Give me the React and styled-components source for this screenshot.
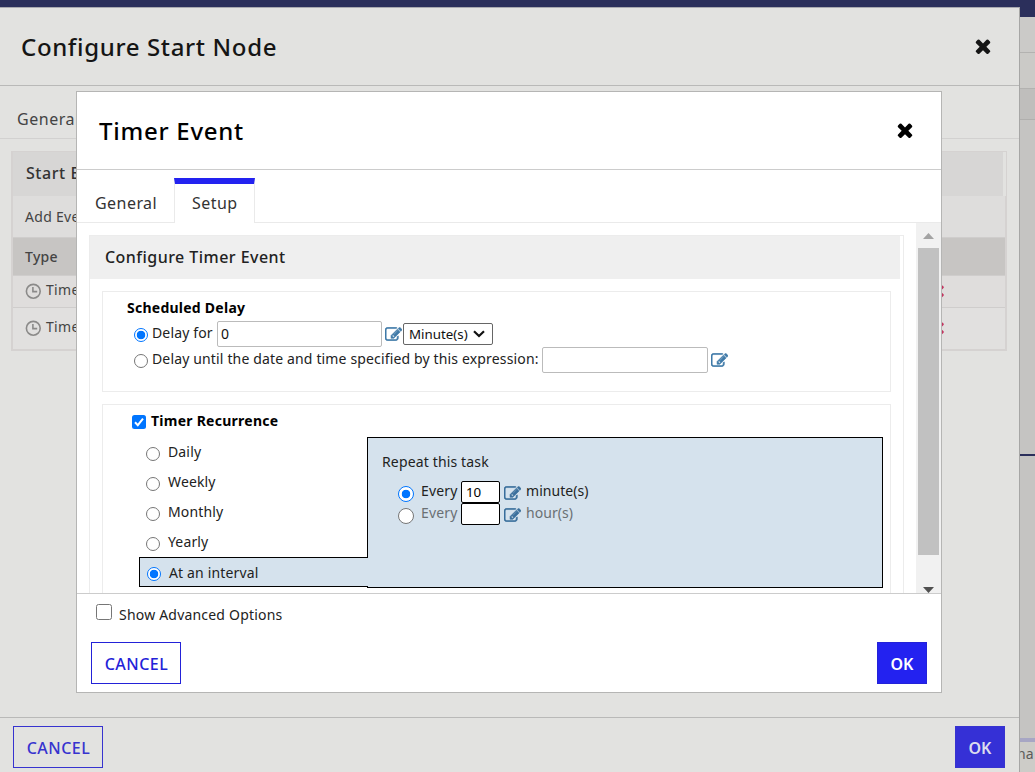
import React from 'react'
import styled, { createGlobalStyle } from 'styled-components'

const GlobalStyle = createGlobalStyle`
  * {
    box-sizing: border-box;
  }
  body {
    margin: 0;
    overflow: hidden;
    font-family: 'Noto Sans', 'Open Sans', sans-serif;
    font-size: 14px;
    letter-spacing: 0.15px;
    color: #222;
  }
  input, select, button {
    font-family: inherit;
    margin: 0;
  }
`

const recurrences = ['Daily', 'Weekly', 'Monthly', 'Yearly', 'At an interval']

const ClockIcon = () => (
  <svg width='16' height='16' viewBox='0 0 16 16' fill='none' stroke='#8b8a89' strokeWidth='1.6'>
    <circle cx='8.3' cy='8.3' r='6.9' />
    <path d='M7.9 4v4.6h4.3' />
  </svg>
)

const CloseIcon = ({ size, className }) => (
  <svg className={className} width={size} height={size} viewBox='0 0 1792 1792' fill='currentColor'>
    <path d='M1490 1322q0 40-28 68l-136 136q-28 28-68 28t-68-28l-294-294-294 294q-28 28-68 28t-68-28l-136-136q-28-28-28-68t28-68l294-294-294-294q-28-28-28-68t28-68l136-136q28-28 68-28t68 28l294 294 294-294q28-28 68-28t68 28l136 136q28 28 28 68t-28 68l-294 294 294 294q28 28 28 68z' />
  </svg>
)

const EditIcon = () => (
  <svg className='edit' viewBox='0 128 1792 1408' fill='currentColor' stroke='currentColor' strokeWidth='60'>
    <path d='M888 1184l116-116-152-152-116 116v56h96v96h56zm440-720q-16-16-33 1l-350 350q-17 17-1 33t33-1l350-350q17-17 1-33zm80 594v190q0 119-84.5 203.5t-203.5 84.5h-832q-119 0-203.5-84.5t-84.5-203.5v-832q0-119 84.5-203.5t203.5-84.5h832q63 0 117 25 15 7 18 23 3 17-9 29l-49 49q-14 14-32 8-23-6-45-6h-832q-66 0-113 47t-47 113v832q0 66 47 113t113 47h832q66 0 113-47t47-113v-126q0-13 9-22l64-64q15-15 35-7t20 29zm-96-738l288 288-672 672h-288v-288zm444 132l-92 92-288-288 92-92q28-28 68-28t68 28l152 152q28 28 28 68t-28 68z' />
  </svg>
)

const ModalHeader = ({ title, muted }) => {
  return <Header $muted={muted}>
    <h1>{title}</h1>
    <button type='button'><CloseIcon size={22} /></button>
  </Header>
}

const FooterButtons = ({ muted }) => {
  return <Buttons>
    <Button type='button' $muted={muted}>CANCEL</Button>
    <Button type='button' $primary $muted={muted}>OK</Button>
  </Buttons>
}

const Interval = ({ value, unit, checked }) => {
  return <IntervalRow $off={!checked}>
    <Radio type='radio' $size={16} checked={checked} readOnly />
    <span className='every'>Every</span>
    <SmallInput defaultValue={value} />
    <EditIcon />
    <span className='unit'>{unit}</span>
  </IntervalRow>
}

const StartNodeDialog = () => {
  return <OuterDialog>
    <ModalHeader title='Configure Start Node' muted />
    <OuterTabs>General</OuterTabs>
    <OuterBody>
      <EventsPanel>
        <h2>Start Events</h2>
        <div className='table'>
          <EventRow $height={42} $bg='#dedddc'>Add Event</EventRow>
          <EventRow $height={38} $bg='#c7c5c3' $bold>Type</EventRow>
          <EventRow $height={32} $bg='#dfdddc'>
            <ClockIcon /><span>Timer</span><CloseIcon size={19} className='remove' />
          </EventRow>
          <EventRow $height={41} $bg='#e1e0df' $last>
            <ClockIcon /><span>Timer</span><CloseIcon size={19} className='remove' />
          </EventRow>
        </div>
      </EventsPanel>
    </OuterBody>
    <OuterFooter>
      <FooterButtons muted />
    </OuterFooter>
  </OuterDialog>
}

const TimerDialog = () => {
  return <InnerDialog>
    <ModalHeader title='Timer Event' />
    <Tabs>
      <Tab>General</Tab>
      <Tab $active>Setup</Tab>
      <TabsRest />
    </Tabs>
    <Body>
      <Content>
        <Panel>
          <PanelTitle>Configure Timer Event</PanelTitle>
          <FieldBox $height={101}>
            <Legend>Scheduled Delay</Legend>
            <DelayRow>
              <Radio type='radio' $size={14} checked readOnly />
              <DelayLabel $width={69}>Delay for</DelayLabel>
              <TextInput $width={165} defaultValue='0' />
              <EditIcon />
              <Select>
                Minute(s)
                <svg width='12' height='8' viewBox='0 0 12 8' fill='none' stroke='#111' strokeWidth='2.2'>
                  <path d='M1 1.2l5 4.8 5-4.8' />
                </svg>
              </Select>
            </DelayRow>
            <DelayRow>
              <Radio type='radio' $size={14} readOnly />
              <DelayLabel $width={394}>Delay until the date and time specified by this expression:</DelayLabel>
              <TextInput $width={166} />
              <EditIcon />
            </DelayRow>
          </FieldBox>
          <FieldBox $height={240}>
            <RecurrenceTitle>
              <Checkbox $checked>
                <svg width='14' height='14' viewBox='0 0 14 14' fill='none' stroke='#fff' strokeWidth='2'>
                  <path d='M3 7.3l2.8 2.9L11 3.6' />
                </svg>
              </Checkbox>
              Timer Recurrence
            </RecurrenceTitle>
            <Recurrence>
              <Options>
                {recurrences.map((name) => {
                  const active = name === 'At an interval'
                  return <Option key={name} $active={active}>
                    <Radio type='radio' $size={14} checked={active} readOnly />
                    <span>{name}</span>
                  </Option>
                })}
              </Options>
              <RepeatPanel>
                <p>Repeat this task</p>
                <Interval value='10' unit='minute(s)' checked />
                <Interval value='' unit='hour(s)' checked={false} />
              </RepeatPanel>
            </Recurrence>
          </FieldBox>
        </Panel>
      </Content>
      <Scrollbar>
        <svg width='11' height='6' viewBox='0 0 11 6'><path d='M5.5 0L11 6H0z' fill='#a3a3a3' /></svg>
        <div className='thumb' />
        <svg width='11' height='6' viewBox='0 0 11 6'><path d='M0 0h11L5.5 6z' fill='#505050' /></svg>
      </Scrollbar>
    </Body>
    <Footer>
      <Advanced>
        <Checkbox $size={16} />
        <span>Show Advanced Options</span>
      </Advanced>
      <FooterButtons />
    </Footer>
  </InnerDialog>
}

const App = () => {
  return <Page>
    <GlobalStyle />
    <Backdrop>
      <Strip $height={17} $bg='#2b2f5b' />
      <Strip $height={36} $bg='#cbcac8' $line='#b3b2b0' />
      <Strip $height={36} $bg='#cbcac7' $line='#b3b2b0' />
      <Strip $height={31} $bg='#bfbebc' $line='#b0afad' />
      <Strip $height={334} $bg='#c5c4c2' />
      <Strip $height={2} $bg='#2b2f5b' />
      <Strip $height={282} $bg='#c5c4c2' />
      <Strip $height={4} $bg='#a7a6c4' />
      <Strip $height={30} $bg='#cdccc8'>na</Strip>
    </Backdrop>
    <StartNodeDialog />
    <TimerDialog />
  </Page>
}

const Page = styled.main`
  position: relative;
  width: 1035px;
  height: 772px;
  overflow: hidden;
`

const Backdrop = styled.div`
  display: flex;
  flex-direction: column;
`

const Strip = styled.div`
  height: ${(p) => p.$height}px;
  background: ${(p) => p.$bg};
  border-bottom: ${(p) => (p.$line ? `1px solid ${p.$line}` : 'none')};
  padding-left: 1017px;
  line-height: 24px;
  color: #5c5b59;
  white-space: nowrap;
`

const OuterDialog = styled.section`
  position: absolute;
  top: 7px;
  left: 0;
  width: 1020px;
  height: 765px;
  display: flex;
  flex-direction: column;
  background: #e2e2e0;
  border-top: 1px solid #a9a9b0;
  border-right: 1px solid #a6a6a5;
`

const InnerDialog = styled.section`
  position: absolute;
  top: 91px;
  left: 76px;
  width: 866px;
  height: 602px;
  display: flex;
  flex-direction: column;
  background: #fff;
  border: 1px solid #b5b5b4;
`

const Header = styled.header`
  display: flex;
  align-items: center;
  justify-content: space-between;
  height: 78px;
  padding: 0 28px 0 ${(p) => (p.$muted ? 21 : 22)}px;
  border-bottom: 1px solid ${(p) => (p.$muted ? '#b9b9b8' : '#ccc')};
  h1 {
    margin: 0;
    font-size: 24px;
    font-weight: 500;
    letter-spacing: ${(p) => (p.$muted ? 0.64 : 0.74)}px;
    color: ${(p) => (p.$muted ? '#151515' : '#000')};
  }
  button {
    display: flex;
    padding: 0;
    margin: 0 1px 2px 0;
    border: none;
    background: transparent;
    width: 15px;
    justify-content: center;
    color: ${(p) => (p.$muted ? '#151515' : '#000')};
  }
  button svg {
    flex: none;
  }
`

const OuterTabs = styled.nav`
  height: 53px;
  padding: 20px 0 0 17px;
  font-size: 16px;
  line-height: 26px;
  letter-spacing: 0.55px;
  color: #444;
  border-bottom: 1px solid #d2d1d0;
`

const OuterBody = styled.div`
  flex: 1;
  padding: 12px 12px 0 11px;
`

const EventsPanel = styled.div`
  border: 1px solid #d5d2d1;
  border-width: 1px 1px 2px 2px;
  h2 {
    margin: 0 3px 0 0;
    height: 44px;
    padding-left: 13px;
    background: #d7d6d5;
    font-size: 16px;
    font-weight: 500;
    line-height: 43px;
    letter-spacing: 0.55px;
    color: #333;
  }
  .table {
    border-right: 1px solid #d5d2d1;
  }
`

const EventRow = styled.div`
  display: flex;
  align-items: center;
  height: ${(p) => p.$height}px;
  padding-left: 12px;
  background: ${(p) => p.$bg};
  border-bottom: ${(p) => (p.$last ? 'none' : '1px solid #cfcdcc')};
  font-weight: ${(p) => (p.$bold ? 500 : 400)};
  letter-spacing: 0.3px;
  color: #444;
  span {
    margin: -4px 0 0 5px;
    flex: 1;
  }
  .remove {
    margin: -2px 58px 0 0;
    color: #c2345f;
  }
  svg:first-child {
    margin-top: -1px;
  }
`

const OuterFooter = styled.footer`
  height: 55px;
  padding: 8px 14px 0 13px;
  border-top: 1px solid #b9b9b8;
`

const Tabs = styled.nav`
  display: flex;
  height: 53px;
  padding-top: 8px;
`

const Tab = styled.div`
  width: ${(p) => (p.$active ? 81 : 97)}px;
  padding-left: ${(p) => (p.$active ? 17 : 18)}px;
  padding-top: ${(p) => (p.$active ? 6 : 12)}px;
  border: 1px solid #eaeaea;
  border-width: ${(p) => (p.$active ? '6px 1px 0' : '0 0 1px')};
  border-top-color: #2322f0;
  font-size: 16px;
  line-height: 26px;
  letter-spacing: 0.45px;
  color: #333;
`

const TabsRest = styled.div`
  flex: 1;
  border-bottom: 1px solid #eaeaea;
`

const Body = styled.div`
  display: flex;
  height: 370px;
  overflow: hidden;
`

const Content = styled.div`
  flex: 1;
  padding: 12px 12px 0 12px;
`

const Panel = styled.div`
  height: 600px;
  border: 1px solid #ececec;
`

const PanelTitle = styled.h2`
  margin: 0 3px 12px 0;
  height: 43px;
  padding-left: 15px;
  background: #efefef;
  font-size: 16px;
  font-weight: 500;
  line-height: 43px;
  letter-spacing: 0.46px;
  color: #222;
`

const FieldBox = styled.div`
  height: ${(p) => p.$height}px;
  margin: 0 12px 12px 12px;
  border: 1px solid #ececec;
`

const Legend = styled.div`
  padding: 5px 0 0 24px;
  height: 29px;
  line-height: 22px;
  font-weight: 700;
  letter-spacing: 0.25px;
  color: #000;
`

const DelayRow = styled.div`
  display: flex;
  align-items: center;
  height: 26px;
  padding-left: 31px;
  .edit {
    margin: 0 1px 0 3px;
    width: 17px;
    height: 14px;
    color: #3f7aa8;
  }
  input[type='radio'] {
    margin-top: 2px;
  }
`

const DelayLabel = styled.span`
  width: ${(p) => p.$width}px;
  margin-top: -3px;
  padding-left: 4px;
  white-space: nowrap;
`

const Radio = styled.input`
  appearance: none;
  flex: none;
  width: ${(p) => p.$size}px;
  height: ${(p) => p.$size}px;
  border: 1px solid ${(p) => (p.checked ? '#0075ff' : '#767676')};
  border-radius: 50%;
  background: ${(p) => (p.checked ? 'radial-gradient(circle, #0075ff 0 4px, #fff 4.6px)' : '#fff')};
`

const Checkbox = styled.span`
  display: block;
  flex: none;
  width: ${(p) => p.$size || 14}px;
  height: ${(p) => p.$size || 14}px;
  border: ${(p) => (p.$checked ? 'none' : '1px solid #767676')};
  border-radius: 2.5px;
  background: ${(p) => (p.$checked ? '#0075ff' : '#fff')};
  svg {
    display: block;
  }
`

const TextInput = styled.input`
  width: ${(p) => p.$width}px;
  height: 26px;
  padding: 0 3px 1px;
  border: 1px solid #bbb;
  border-radius: 2px;
  background: #fff;
  font-size: 14px;
  color: #111;
`

const Select = styled.div`
  display: flex;
  align-items: center;
  justify-content: space-between;
  width: 90px;
  height: 22px;
  padding: 0 7px 0 5px;
  border: 1px solid #666;
  border-radius: 2px;
  font-size: 13.33px;
  letter-spacing: 0;
  color: #111;
`

const RecurrenceTitle = styled.div`
  display: flex;
  align-items: center;
  gap: 5px;
  height: 32px;
  padding: 0 0 1px 29px;
  font-weight: 700;
  letter-spacing: 0.25px;
  color: #000;
  ${Checkbox} {
    margin-top: 2px;
  }
`

const Recurrence = styled.div`
  display: flex;
  padding: 0 7px 0 36px;
`

const Options = styled.div`
  width: 228px;
`

const Option = styled.div`
  position: relative;
  z-index: 1;
  display: flex;
  align-items: center;
  height: 30px;
  padding-left: 7px;
  margin-right: ${(p) => (p.$active ? -1 : 0)}px;
  border: ${(p) => (p.$active ? '1px solid #000' : 'none')};
  border-right: none;
  background: ${(p) => (p.$active ? '#d5e2ed' : 'none')};
  input {
    margin-top: 4px;
  }
  span {
    margin: ${(p) => (p.$active ? 0 : -2)}px 0 0 8px;
  }
`

const RepeatPanel = styled.div`
  flex: 1;
  height: 151px;
  padding: 14px 0 0 14px;
  border: 1px solid #000;
  background: #d5e2ed;
  p {
    margin: 0 0 9px;
    line-height: 20px;
    color: #222;
  }
`

const IntervalRow = styled.div`
  display: flex;
  align-items: center;
  height: 22px;
  padding-left: 16px;
  color: ${(p) => (p.$off ? '#6a7074' : '#222')};
  .every {
    width: 47px;
    margin-top: -4px;
    padding-left: 7px;
  }
  input[type='radio'] {
    margin-top: 3px;
  }
  .edit {
    margin: 1px 5px 0 4px;
    width: 17px;
    height: 14px;
    color: #3a6f9c;
  }
  .unit {
    margin-top: -4px;
    letter-spacing: 0.05px;
  }
`

const SmallInput = styled.input`
  width: 39px;
  height: 22px;
  padding: 0 4px 1px;
  border: 1px solid #000;
  border-radius: 2px;
  background: #fff;
  font-size: 13.33px;
`

const Scrollbar = styled.div`
  display: flex;
  flex-direction: column;
  align-items: center;
  justify-content: space-between;
  width: 25px;
  padding-top: 10px;
  background: #f1f1f1;
  .thumb {
    width: 21px;
    height: 307px;
    margin: 9px 0 32px;
    background: #c1c1c1;
  }
`

const Footer = styled.footer`
  height: 99px;
  padding: 0 14px;
  border-top: 1px solid #ccc;
`

const Advanced = styled.div`
  display: flex;
  height: 48px;
  padding: 10px 0 0 5px;
  span + span {
    margin-left: 7px;
    line-height: 22px;
    letter-spacing: 0.2px;
  }
`

const Buttons = styled.div`
  display: flex;
  justify-content: space-between;
`

const Button = styled.button`
  width: ${(p) => (p.$primary ? 50 : 90)}px;
  height: 42px;
  padding: 2px 0 0 ${(p) => (p.$primary ? 0 : 1)}px;
  border: 1px solid ${(p) => (p.$muted ? '#3733cf' : '#2322d8')};
  background: ${(p) => (p.$primary ? (p.$muted ? '#3530d6' : '#2322f0') : 'transparent')};
  font-size: 16px;
  font-weight: ${(p) => (p.$primary ? 600 : 500)};
  letter-spacing: ${(p) => (p.$primary ? 0 : 0.5)}px;
  color: ${(p) => (p.$primary ? (p.$muted ? '#dcdcee' : '#fff') : (p.$muted ? '#3733cf' : '#2322d8'))};
`

export default App
